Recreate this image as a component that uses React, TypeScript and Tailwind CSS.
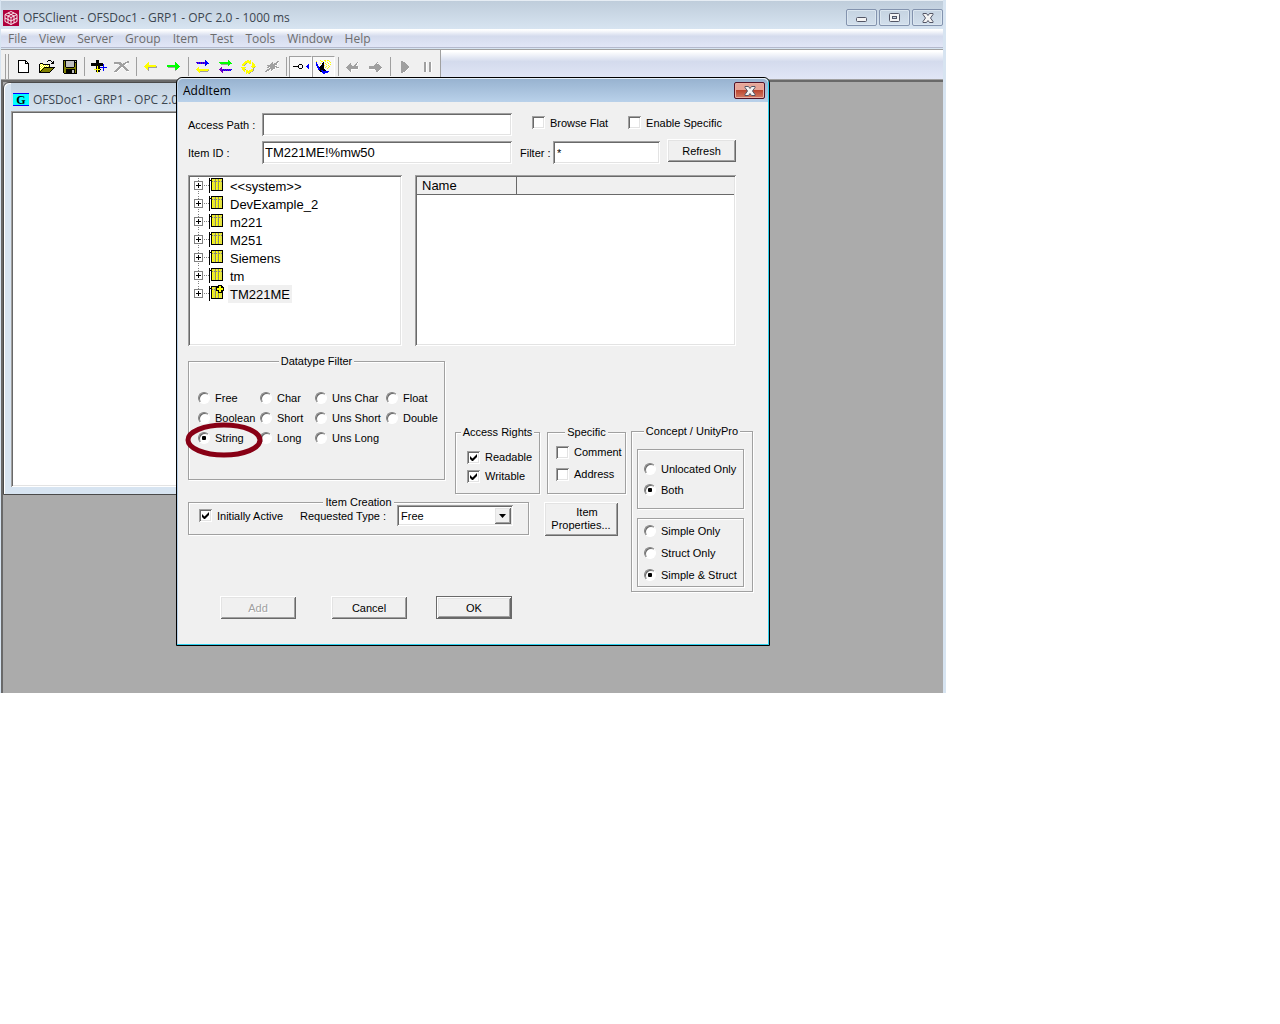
import { useState } from "react";
import type { ReactNode } from "react";

const PALETTE: Record<string, string> = {
  K: "#000000",
  W: "#ffffff",
  Y: "#ffff00",
  O: "#808000",
  G: "#a0a0a0",
  L: "#c0c0c0",
  B: "#0000ff",
  N: "#00ff00",
  M: "#8000c0",
};

// 16-colour toolbar bitmaps, one character per pixel
const SPRITES: Record<string, string[]> = {
  new: [
    "KKKKKKKK...",
    "KWWWWWWKK..",
    "KWWWWWWKWK.",
    "KWWWWWWKKKK",
    "KWWWWWWWWWK",
    "KWWWWWWWWWK",
    "KWWWWWWWWWK",
    "KWWWWWWWWWK",
    "KWWWWWWWWWK",
    "KWWWWWWWWWK",
    "KWWWWWWWWWK",
    "KWWWWWWWWWK",
    "KKKKKKKKKKK",
  ],
  open: [
    ".........KKK....",
    "........K...K.K.",
    ".............KK.",
    ".KKK........KKK.",
    "KYWYKKKKKKK.....",
    "KWYWYWYWYWK.....",
    "KYWYWYWYWYK.....",
    "KWYWYKKKKKKKKKKK",
    "KYWYKOOOOOOOOOK.",
    "KWYKOOOOOOOOOK..",
    "KYKOOOOOOOOOK...",
    "KKOOOOOOOOOK....",
    "KKKKKKKKKKK.....",
  ],
  save: [
    "KKKKKKKKKKKKKK",
    "KOKLLLLLLLLKLK",
    "KOKLLLLLLLLKKK",
    "KOKLLLLLLLLKOK",
    "KOKLLLLLLLLKOK",
    "KOKLLLLLLLLKOK",
    "KOKLLLLLLLLKOK",
    "KOOKKKKKKKKOOK",
    "KOOOOOOOOOOOOK",
    "KOOKKKKKKKKKOK",
    "KOOKKKKKKLLKOK",
    "KOOKKKKKKLLKOK",
    "KOOKKKKKKLLKOK",
    ".KKKKKKKKKKKKK",
  ],
  add: [
    ".....KKK........",
    ".....KKK........",
    ".....KKK........",
    "KKKKKKKKKKKK....",
    "KKKKKKKKKKKKB...",
    "KKKKKKKKKKKKB...",
    ".....KYKK...B...",
    ".....KYKKBBBBBBB",
    ".....KYKK...B...",
    "...YYYYYYK..B...",
    ".....KYKK...B...",
    ".....KYKK.......",
    "......Y.........",
  ],
  remove: [
    ".............GG",
    "GGGGGGG....GGGG",
    "GGGGGGGG.GGGWW.",
    ".WW..GGGGGGWW..",
    "......GGGGW....",
    ".....GGGGGG....",
    "....GGGWWGGG...",
    "...GGGW..WGGG..",
    "..GGGW.....GGG.",
    ".GGGW.......GGG",
    "GGGW.........WW",
    ".WW............",
  ],
  left: [
    "....Y........",
    "...YY........",
    "..YYY........",
    ".YYYYYYYYYYY.",
    "YYYYYYYYYYYYG",
    ".YYYGGGGGGGGG",
    "..YYG........",
    "...YG........",
    "....G........",
  ],
  right: [
    "........N....",
    "........NN...",
    "........NNN..",
    "NNNNNNNNNNNN.",
    "NNNNNNNNNNNNN",
    ".GGGGGGGNNNN.",
    "........NNN..",
    "........NN...",
    "........G....",
  ],
  readWrite: [
    ".........B....",
    ".........BB...",
    "MBMBMBMBMBBB..",
    ".BMBMBMBMBBBB.",
    ".........BB...",
    ".........B....",
    "..............",
    "..Y...........",
    ".YY...........",
    "YYYYYYYYYYYYY.",
    ".YYYYYYYYYYYG.",
    "..YYGGGGGGGG..",
    "...Y..........",
  ],
  refreshAll: [
    ".........N....",
    ".........NN...",
    "NNNNNNNNNNNN..",
    ".NNNNNNNNNNNN.",
    "..GGGGGGGNN...",
    ".........N....",
    "..............",
    "..M...........",
    ".MM...........",
    "MMMMBMBMBMBMB.",
    ".MMBMBMBMBMB..",
    "..MM..........",
    "...M..........",
  ],
  cycle: [
    "......YY.Y.....",
    "....YYYYYY.....",
    "...YYYYYYY.Y...",
    "..YYYG..YY.YY..",
    ".YYYG......YYY.",
    ".YYG.......YYY.",
    "..........YYYYY",
    "YYYYY......YYG.",
    ".YYY........G..",
    ".YYYG.....YYG..",
    "..YY.YY.YYYYG..",
    "...Y.YYYYYYG...",
    ".....YYYYG.....",
    ".....Y.YG......",
  ],
  broken: [
    "............GG",
    ".......G...GGW",
    "......GG.GGGW.",
    ".....GGGGGGGW.",
    "..GGGGGGGGW...",
    "...GGGGGGGGGW.",
    "..GGWGGGGGWGGG",
    "....GGGGGGW.WW",
    "..GGGWGGWW....",
    ".GGGW.GW......",
    "GGW...W.......",
  ],
  connect: [
    "......KKK......B",
    ".....K...K....BB",
    "KKKKKK...K...BBB",
    ".....K...K....BB",
    "......KKK......B",
  ],
  trace: [
    "....Y...YY.YY..",
    "Y....YY..Y...Y.",
    "B......K...Y..Y",
    "B...Y.KK.Y..Y..",
    "BB....KK..Y...Y",
    "BB...KKKY...Y..",
    ".BB.KKKK..Y..Y.",
    ".BBKKKKK.Y..Y..",
    "..BBKKKK...Y...",
    "..BBKKKKK......",
    "...KKBBKKK.....",
    "....KKBBBBBBB..",
    "......BBBBBB...",
    ".......BB......",
  ],
  undoItem: [
    "...........GW",
    "....G.....GW.",
    "...GG....GGW.",
    "..GGGG..GGW..",
    ".GGGGGGGGGGG.",
    "GGGGGGGGGGGGW",
    ".GGGGGGGGGGGW",
    "..GGGWWWWWWW.",
    "...GGW.......",
    "....GW.......",
  ],
  redoItem: [
    "........G....",
    ".......GW....",
    "......GGGG...",
    ".....GGGGGG..",
    "GGGGGGGGGGGG.",
    "GGGGGGGGGGGGG",
    "GGGGGGGGGGGGW",
    "WWWWWWGGGGGW.",
    ".......GGGW..",
    ".......GGW...",
  ],
  play: [
    "GG......",
    "GGGG....",
    "GGGGG...",
    "GGGGGG..",
    "GGGGGGG.",
    "GGGGGGGG",
    "GGGGGGGG",
    "GGGGGGGW",
    "GGGGGGW.",
    "GGGGGW..",
    "GGGGW...",
    "GGW.....",
  ],
  pause: [
    "GGW..GGW",
    "GGW..GGW",
    "GGW..GGW",
    "GGW..GGW",
    "GGW..GGW",
    "GGW..GGW",
    "GGW..GGW",
    "GGW..GGW",
    "GGW..GGW",
    "GGW..GGW",
  ],
};

function Sprite({ name }: { name: string }) {
  const rows = SPRITES[name];
  return (
    <svg
      width={rows[0].length}
      height={rows.length}
      shapeRendering="crispEdges"
      className="shrink-0"
      aria-hidden="true"
    >
      {rows.flatMap((row, y) =>
        [...row].map((c, x) =>
          c === "." ? null : <rect key={`${x}-${y}`} x={x} y={y} width={1} height={1} fill={PALETTE[c]} />
        )
      )}
    </svg>
  );
}

const TOOL_GROUPS = [
  ["new", "open", "save"],
  ["add", "remove"],
  ["left", "right"],
  ["readWrite", "refreshAll", "cycle", "broken"],
  ["connect", "trace"],
  ["undoItem", "redoItem"],
  ["play", "pause"],
];

const MENUS = ["File", "View", "Server", "Group", "Item", "Test", "Tools", "Window", "Help"];
const TREE = ["<<system>>", "DevExample_2", "m221", "M251", "Siemens", "tm", "TM221ME"];
const DATATYPES = [
  ["Free", "Boolean", "String"],
  ["Char", "Short", "Long"],
  ["Uns Char", "Uns Short", "Uns Long"],
  ["Float", "Double"],
];

const sunken =
  "bg-white shadow-[inset_1px_1px_0_#a0a0a0,inset_-1px_-1px_0_#fff,inset_2px_2px_0_#696969,inset_-2px_-2px_0_#e3e3e3]";
const raised =
  "bg-[#f0f0f0] shadow-[inset_1px_1px_0_#fff,inset_-1px_-1px_0_#696969,inset_2px_2px_0_#e3e3e3,inset_-2px_-2px_0_#a0a0a0]";
const etched = "border border-[#a0a0a0] shadow-[1px_1px_0_#fff,inset_1px_1px_0_#fff]";

function Group({ title, className, children }: { title: string; className: string; children: ReactNode }) {
  return (
    <fieldset className={`min-w-0 ${etched} ${className}`}>
      <legend className="mx-auto h-[14px] bg-[#f0f0f0] px-[2px]">{title}</legend>
      {children}
    </fieldset>
  );
}

function CheckBox({ label, defaultChecked }: { label: string; defaultChecked?: boolean }) {
  return (
    <label className="flex h-[14px] items-center gap-[5px] whitespace-nowrap">
      <span className="grid size-[13px] shrink-0">
        <input
          type="checkbox"
          defaultChecked={defaultChecked}
          className={`peer col-start-1 row-start-1 size-[13px] appearance-none ${sunken}`}
        />
        <svg
          viewBox="0 0 13 13"
          className="pointer-events-none invisible col-start-1 row-start-1 size-[13px] peer-checked:visible"
        >
          <path d="M3 5v3l2 2h1l4-4V3L5.500 7.500z" fill="#000" />
        </svg>
      </span>
      {label}
    </label>
  );
}

function Radio({ label, name, defaultChecked }: { label: string; name: string; defaultChecked?: boolean }) {
  return (
    <label className="flex h-[14px] items-center gap-[5px] whitespace-nowrap">
      <span className="grid size-[12px] shrink-0">
        <input
          type="radio"
          name={name}
          defaultChecked={defaultChecked}
          className="peer col-start-1 row-start-1 size-[12px] appearance-none rounded-full border border-t-[#808080] border-r-white border-b-white border-l-[#808080] bg-white shadow-[inset_1px_1px_0_#696969]"
        />
        <span className="pointer-events-none invisible col-start-1 row-start-1 size-[4px] place-self-center rounded-[1px] bg-black peer-checked:visible" />
      </span>
      {label}
    </label>
  );
}

function PushButton({ className, disabled, children }: { className: string; disabled?: boolean; children: ReactNode }) {
  return (
    <button
      disabled={disabled}
      className={`${raised} text-center disabled:text-[#a0a0a0] disabled:[text-shadow:1px_1px_0_#fff] ${className}`}
    >
      {children}
    </button>
  );
}

function CloseGlyph() {
  return (
    <svg width="12" height="10" viewBox="0 0 12 10" aria-hidden="true">
      <path
        d="M1 .5h3.500L6 2.500 7.500.500H11v1L8.500 5 11 8.500v1H7.500L6 7.500 4.500 9.500H1v-1L3.500 5 1 1.500z"
        fill="#f4f4f4"
        stroke="#535666"
      />
    </svg>
  );
}

function WindowButton({ label, children }: { label: string; children: ReactNode }) {
  return (
    <button
      aria-label={label}
      className="flex h-[17px] w-[31px] items-center justify-center rounded-[2px] border border-[#8393ae] bg-linear-to-b from-[#c5d3e1] to-[#d2dfec] shadow-[inset_0_0_0_1px_#dbe6f0]"
    >
      {children}
    </button>
  );
}

function TreeIcon({ selected, last }: { selected: boolean; last: boolean }) {
  return (
    <svg width="32" height="18" shapeRendering="crispEdges" aria-hidden="true">
      <rect x="0" y="4" width="9" height="9" fill="#808080" />
      <rect x="1" y="5" width="7" height="7" fill="#fff" />
      <path d="M2 8h5v1H2zM4 6h1v5H4z" fill="#000" />
      <path d="M10 8.500h5M4.500 1v3" stroke="#808080" strokeDasharray="1 1" />
      {!last && <path d="M4.500 14v4" stroke="#808080" strokeDasharray="1 1" />}
      <path d="M15 1h1v15h-1zM16 3h2v1h-2z" fill="#000" />
      <rect x="17" y="1" width="12" height="13" fill="#000" />
      <rect x="18" y="2" width="10" height="11" fill="#ffff00" />
      <path d="M18 4.500h10M21.500 2v11M24.500 2v11" stroke="#909060" />
      <path
        d="M19.500 2v11M20.500 3v10M23.500 2v11M26.500 2v11M27.500 3v10"
        stroke="#c8c880"
        strokeDasharray="1 1"
      />
      {selected && (
        <>
          <path d="M24 0h4v2h2v4h-2v2h-4V6h-2V2h2z" fill="#000" />
          <path d="M25 1h2v2h2v2h-2v2h-2V5h-2V3h2z" fill="#ffff00" />
        </>
      )}
    </svg>
  );
}

function AddItemDialog() {
  const [itemId, setItemId] = useState("TM221ME!%mw50");
  const [selected, setSelected] = useState("TM221ME");

  return (
    <section
      role="dialog"
      aria-label="AddItem"
      className="absolute top-[77px] left-[176px] w-[594px] rounded-t-[6px] border border-black bg-[#f0f0f0] font-['Liberation_Sans',sans-serif] text-[11px] leading-[14px] text-black shadow-[inset_-1px_-1px_0_#2fd0ee,inset_1px_0_0_#b9d1ea]"
    >
      <header className="mx-px flex h-6 items-center justify-between rounded-t-[5px] border-t border-[#e6f0fa] bg-linear-to-b from-[#98b3d0] to-[#b9d1ea] pr-[3px] pl-[5px] font-['Open_Sans',sans-serif] text-[12px]">
        <h2>AddItem</h2>
        <button
          aria-label="Close"
          className="flex h-[17px] w-[31px] items-center justify-center rounded-[2px] border border-[#521328] bg-linear-to-b from-[#e6a598] from-45% via-[#bb4731] via-50% to-[#d27963] shadow-[inset_0_0_0_1px_#e8b0a4]"
        >
          <CloseGlyph />
        </button>
      </header>

      <div className="pt-[11px] pr-4 pb-[26px] pl-[11px]">
        <div className="grid grid-cols-[74px_250px_auto] items-center gap-y-[5px]">
          <label htmlFor="path">Access Path :</label>
          <input id="path" className={`h-[23px] px-[3px] text-[13px] ${sunken}`} />
          <div className="flex gap-5 pb-1 pl-5">
            <CheckBox label="Browse Flat" />
            <CheckBox label="Enable Specific" />
          </div>
          <label htmlFor="item">Item ID :</label>
          <input
            id="item"
            value={itemId}
            onChange={(e) => setItemId(e.target.value)}
            className={`h-[23px] px-[3px] text-[13px] ${sunken}`}
          />
          <div className="flex h-[23px] items-center pl-2">
            <label htmlFor="filter" className="w-[33px] whitespace-nowrap">
              Filter :
            </label>
            <input id="filter" defaultValue="*" className={`h-[23px] w-[107px] px-[4px] ${sunken}`} />
            <PushButton className="mb-1 ml-[7px] h-[23px] w-[69px] shrink-0">Refresh</PushButton>
          </div>
        </div>

        <div className="mt-[11px] flex gap-[13px] text-[13px]">
          <ul role="tree" className={`h-[171px] w-[214px] py-[2px] pl-[6px] leading-5 ${sunken}`}>
            {TREE.map((name, i) => (
              <li
                key={name}
                role="treeitem"
                aria-selected={name === selected}
                onClick={() => setSelected(name)}
                className="flex h-[18px] gap-[2px]"
              >
                <TreeIcon selected={name === selected} last={i === TREE.length - 1} />
                <span className={name === selected ? "bg-[#f0f0f0] px-[2px]" : "px-[2px]"}>{name}</span>
              </li>
            ))}
          </ul>
          <div className={`h-[171px] w-[321px] p-[2px] ${sunken}`}>
            <table className="w-full border-collapse">
              <thead>
                <tr className="border-b border-[#696969] bg-[#f0f0f0] text-left leading-[17px]">
                  <th className="w-[99px] border-r border-[#696969] pl-[5px] font-normal">Name</th>
                  <th />
                </tr>
              </thead>
            </table>
          </div>
        </div>

        <div className="mt-2 flex gap-[5px]">
          <div className="w-[438px]">
            <div className="flex">
              <Group title="Datatype Filter" className="relative h-[126px] w-[257px]">
                <div className="grid grid-cols-[62px_55px_71px_auto] pt-[23px] pl-[9px]">
                  {DATATYPES.map((col) => (
                    <div key={col[0]} className="flex flex-col gap-[6px]">
                      {col.map((type) => (
                        <Radio key={type} name="datatype" label={type} defaultChecked={type === "String"} />
                      ))}
                    </div>
                  ))}
                </div>
                <svg
                  width="80"
                  height="38"
                  className="pointer-events-none absolute top-[53px] left-[-5px]"
                  aria-hidden="true"
                >
                  <ellipse cx="40" cy="19" rx="36" ry="15" fill="none" stroke="#880015" strokeWidth="5" />
                </svg>
              </Group>
              <Group title="Access Rights" className="mt-[71px] ml-[10px] h-[69px] w-[85px]">
                <div className="flex flex-col gap-[5px] pt-[11px] pl-[11px]">
                  <CheckBox label="Readable" defaultChecked />
                  <CheckBox label="Writable" defaultChecked />
                </div>
              </Group>
              <Group title="Specific" className="mt-[71px] ml-[7px] h-[69px] w-[79px]">
                <div className="flex flex-col gap-2 pt-[6px] pl-2">
                  <CheckBox label="Comment" />
                  <CheckBox label="Address" />
                </div>
              </Group>
            </div>
            <div className="mt-px flex gap-[15px]">
              <Group title="Item Creation" className="h-10 w-[341px]">
                <div className="-mt-1 flex items-center pl-[10px]">
                  <CheckBox label="Initially Active" defaultChecked />
                  <label htmlFor="type" className="ml-auto">
                    Requested Type :
                  </label>
                  <span className="mr-[15px] ml-[11px] grid w-[116px]">
                    <select id="type" className={`col-start-1 row-start-1 h-[21px] appearance-none pl-1 ${sunken}`}>
                      <option>Free</option>
                    </select>
                    <span
                      className={`pointer-events-none col-start-1 row-start-1 mr-[2px] flex h-[17px] w-[17px] items-center justify-center self-center justify-self-end ${raised}`}
                    >
                      <svg width="7" height="4" aria-hidden="true">
                        <path d="M0 0h7L3.500 4z" />
                      </svg>
                    </span>
                  </span>
                </div>
              </Group>
              <PushButton className="mt-[7px] h-[34px] w-[74px] leading-[13px]">
                <span className="pl-3">Item</span>
                <br />
                Properties...
              </PushButton>
            </div>
            <div className="mt-[60px] flex pl-8">
              <PushButton disabled className="h-[23px] w-[76px]">
                Add
              </PushButton>
              <PushButton className="ml-[35px] h-[23px] w-[76px]">Cancel</PushButton>
              <PushButton className="ml-[29px] h-[23px] w-[76px] border border-[#696969]">OK</PushButton>
            </div>
          </div>

          <Group title="Concept / UnityPro" className="mt-[70px] h-[168px] w-[122px] self-start px-[5px]">
            <div role="radiogroup" className={`mt-[11px] flex h-[60px] w-[107px] flex-col gap-[7px] pt-3 pl-[6px] ${etched}`}>
              <Radio name="location" label="Unlocated Only" />
              <Radio name="location" label="Both" defaultChecked />
            </div>
            <div role="radiogroup" className={`mt-[9px] flex h-[69px] w-[107px] flex-col gap-2 pt-[5px] pl-[6px] ${etched}`}>
              <Radio name="structure" label="Simple Only" />
              <Radio name="structure" label="Struct Only" />
              <Radio name="structure" label="Simple & Struct" defaultChecked />
            </div>
          </Group>
        </div>
      </div>
    </section>
  );
}

export default function App() {
  return (
    <div className="min-h-screen bg-white">
      <main className="relative w-full max-w-[946px] bg-[#d7e4f1] pr-[3px] pl-px font-['Open_Sans',sans-serif] text-[12px] text-[#3c4650]">
        <header className="flex h-[29px] items-center justify-between border-t border-[#e6edf4] bg-linear-to-b from-[#bfcddb] to-[#d7e4f1] pt-[5px] pl-[2px]">
          <div className="flex items-center gap-1">
            <svg width="16" height="16" viewBox="0 0 16 16" aria-hidden="true">
              <rect width="16" height="16" fill="#b0003c" />
              <path
                d="M8 1.500 14 4.500v7L8 14.500 2 11.500v-7zM2 4.500l6 3 6-3M8 7.500v7M5 3l6 3v7M11 3 5 6v7M2 8l6 3 6-3"
                fill="none"
                stroke="#fff"
                strokeWidth=".9"
              />
            </svg>
            <h1>OFSClient - OFSDoc1 - GRP1 - OPC 2.0 - 1000 ms</h1>
          </div>
          <div className="flex gap-[2px]">
            <WindowButton label="Minimize">
              <svg width="11" height="5" className="mt-1">
                <rect x=".5" y=".5" width="10" height="4" rx="1" fill="#f4f4f4" stroke="#535666" />
              </svg>
            </WindowButton>
            <WindowButton label="Maximize">
              <svg width="11" height="9">
                <rect x=".5" y=".5" width="10" height="8" rx="1" fill="#f4f4f4" stroke="#535666" />
                <rect x="3.500" y="3.500" width="4" height="2" fill="#c5d3e1" stroke="#535666" />
              </svg>
            </WindowButton>
            <WindowButton label="Close">
              <CloseGlyph />
            </WindowButton>
          </div>
        </header>

        <nav className="flex h-[19px] items-center gap-3 border-b border-[#b4b9cd] bg-linear-to-b from-white from-5% via-[#d4dbed] via-40% to-[#e1e6f6] pt-[2px] pl-[7px] text-[#6d6d6d]">
          {MENUS.map((menu) => (
            <button key={menu}>{menu}</button>
          ))}
        </nav>

        <div className="mt-px flex h-[31px] border-t border-b border-t-[#a0a0a0] border-b-[#a0a0a0] bg-linear-to-b from-white from-5% via-[#d4dbed] via-40% to-[#e1e6f6]">
          <div className="flex items-center border-r border-[#a0a0a0] bg-[#f0f0f0] pt-[4px] pr-px">
            <span className="mr-[3px] ml-[4px] h-[25px] w-[4px] border-x border-x-[#a0a0a0]" />
            {TOOL_GROUPS.map((group, i) => (
              <div key={group[0]} className="flex items-center">
                {i > 0 && (
                  <span className="flex w-[6px] justify-center">
                    <span className="h-[19px] w-px bg-[#a0a0a0]" />
                  </span>
                )}
                {group.map((tool) => (
                  <button
                    key={tool}
                    aria-label={tool}
                    className={`flex h-[22px] w-[23px] items-center justify-center ${
                      group[0] === "connect" ? "border border-t-[#a0a0a0] border-r-white border-b-white border-l-[#a0a0a0] bg-[#f8f8f8]" : ""
                    }`}
                  >
                    <Sprite name={tool} />
                  </button>
                ))}
              </div>
            ))}
          </div>
        </div>

        <div className="relative min-h-[613px] border-t-2 border-l-2 border-t-[#696969] border-l-[#696969] bg-[#ababab]">
          <section
            aria-label="OFSDoc1"
            className="absolute top-0 left-0 w-[200px] rounded-tl-[6px] border border-[#4a4a4a] bg-[#d7e4f1] pb-[7px] pl-[7px] shadow-[inset_1px_1px_0_#fff]"
          >
            <h2 className="flex h-7 items-center gap-1 overflow-hidden bg-linear-to-b from-[#c3d1df] to-[#d7e4f1] pt-[5px] pl-[2px] whitespace-nowrap">
              <span className="h-[13px] w-4 border-y border-[#0000ff] bg-[#00ffff] text-center font-['Liberation_Serif',serif] text-[12px] leading-[12px] font-bold text-black">
                G
              </span>
              OFSDoc1 - GRP1 - OPC 2.0
            </h2>
            <div className={`min-h-[376px] ${sunken}`} />
          </section>
        </div>

        <AddItemDialog />
      </main>
    </div>
  );
}
